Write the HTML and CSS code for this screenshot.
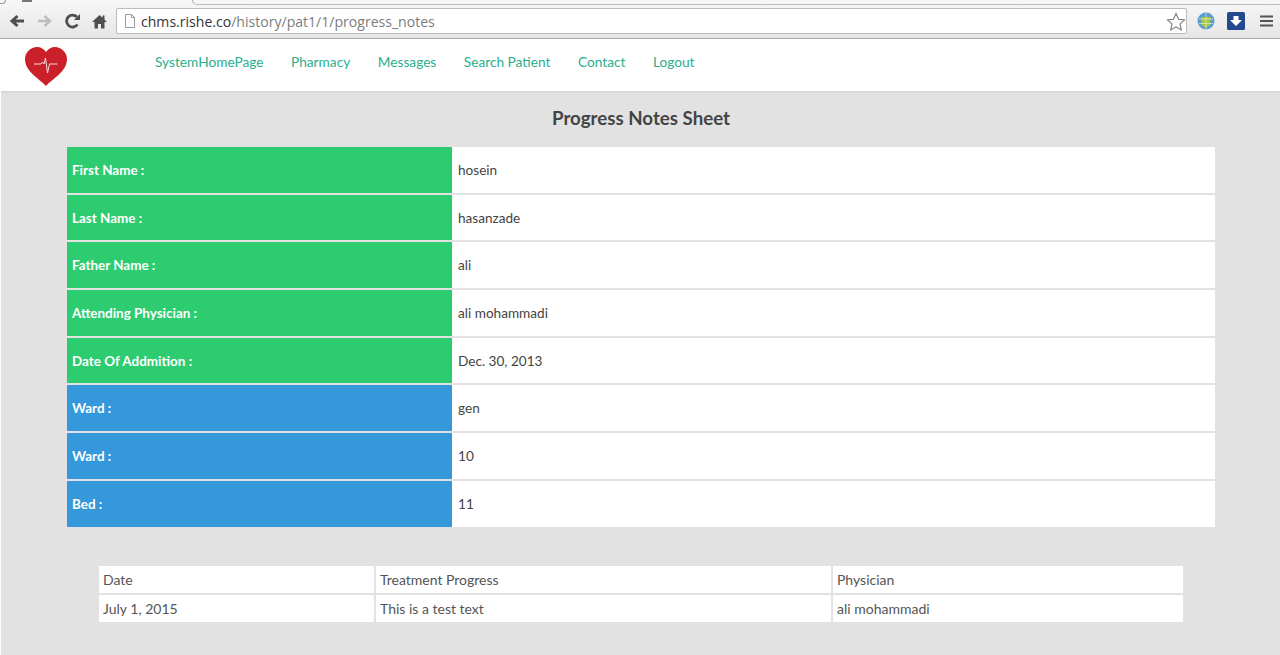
FILE: index.html
```html
<!DOCTYPE html>
<html lang="en">
<head>
<meta charset="utf-8">
<title>Progress Notes Sheet</title>
<link rel="stylesheet" href="styles.css">
</head>
<body>
<div class="chrome">
  <div class="tabstrip">
    <div class="tab-edge"></div>
    <div class="tab-new"></div>
    <div class="tab-line"></div>
  </div>
  <div class="toolbar">
    <svg class="tb-icon tb-back" width="16" height="14" viewBox="0 0 16 14"><path d="M15 7H4M8.500 2 3 7l5.500 5" fill="none" stroke="#4f4f4f" stroke-width="3"/></svg>
    <svg class="tb-icon tb-forward" width="16" height="14" viewBox="0 0 16 14"><path d="M1 7h11M7.500 2 13 7l-5.500 5" fill="none" stroke="#bdbdbd" stroke-width="2.400"/></svg>
    <svg class="tb-icon tb-reload" width="16" height="16" viewBox="0 0 16 16"><path d="M12.500 11.500A6 6 0 1 1 12 4" fill="none" stroke="#4f4f4f" stroke-width="2.800"/><path d="M9 7h6V1z" fill="#4f4f4f"/></svg>
    <svg class="tb-icon tb-home" width="15" height="15" viewBox="0 0 15 15"><path d="M7.500 1 0 8h2.500v6.500h3.500V10h3v4.500h3.500V8H15l-2.500-2.400V1.500h-2v2.200z" fill="#4f4f4f"/></svg>
    <div class="omnibox">
      <svg width="12" height="14" viewBox="0 0 12 14"><path d="M1.500.5h6l3 3v10h-9zM7.500.5v3h3" fill="#fff" stroke="#9a9a9a"/></svg>
      <span class="url"><span class="url-host">chms.rishe.co</span><span class="url-path">/history/pat1/1/progress_notes</span></span>
      <svg class="star" width="20" height="19" viewBox="0 0 20 19"><path d="M10 1.500l2.500 5.700 6 .6-4.500 4.100 1.300 6L10 14.800l-5.300 3.100 1.300-6L1.500 7.800l6-.6z" fill="#fff" stroke="#777" stroke-width="1.100"/></svg>
    </div>
    <svg class="ext ext-globe" width="18" height="18" viewBox="0 0 18 18"><circle cx="9" cy="9" r="8.500" fill="#5b9bd0"/><path d="M4 5h10l-1 8-4 3-4-3z" fill="#a5c83c"/><path d="M9 1v16M2 7h14M2 11.500h14" stroke="#e7eecf" stroke-width=".7"/></svg>
    <svg class="ext ext-save" width="18" height="18" viewBox="0 0 18 18"><rect width="18" height="18" rx="1.500" fill="#25498f"/><path d="M6.500 4h5v4H15l-6 6-6-6h3.500z" fill="#fff"/></svg>
    <svg class="menu" width="13" height="12" viewBox="0 0 13 12"><path d="M0 1.500h13M0 6h13M0 10.500h13" stroke="#555" stroke-width="2.200"/></svg>
  </div>
</div>

<nav class="topnav">
  <svg class="logo" width="42" height="40" viewBox="0 0 42 40">
    <path d="M21 39C15 32 0 25 0 12 0 5 6 0 12 0c4 0 7 2 9 5 2-3 5-5 9-5 6 0 12 5 12 12 0 13-15 20-21 27z" fill="#c9202a"/>
    <path d="M9 17h7l1.500-2 1.500 2 1.500-6 2 15 2-9h8" fill="none" stroke="#f6dcdc" stroke-width="1"/>
  </svg>
  <ul class="navlinks">
    <li><a href="#">SystemHomePage</a></li>
    <li><a href="#">Pharmacy</a></li>
    <li><a href="#">Messages</a></li>
    <li><a href="#">Search Patient</a></li>
    <li><a href="#">Contact</a></li>
    <li><a href="#">Logout</a></li>
  </ul>
</nav>

<main class="content">
  <h1 class="title">Progress Notes Sheet</h1>
  <section class="info">
    <div class="label green">First Name :</div><div class="value">hosein</div>
    <div class="label green">Last Name :</div><div class="value">hasanzade</div>
    <div class="label green">Father Name :</div><div class="value">ali</div>
    <div class="label green">Attending Physician :</div><div class="value">ali mohammadi</div>
    <div class="label green">Date Of Addmition :</div><div class="value">Dec. 30, 2013</div>
    <div class="label blue">Ward :</div><div class="value">gen</div>
    <div class="label blue">Ward :</div><div class="value">10</div>
    <div class="label blue">Bed :</div><div class="value">11</div>
  </section>
  <section class="notes">
    <div class="cell">Date</div><div class="cell">Treatment Progress</div><div class="cell">Physician</div>
    <div class="cell">July 1, 2015</div><div class="cell">This is a test text</div><div class="cell">ali mohammadi</div>
  </section>
</main>
</body>
</html>
```

FILE: styles.css
```css
* { box-sizing: border-box; }
html, body { margin: 0; height: 100%; overflow: hidden; }
body {
  font-family: Lato, "Open Sans", sans-serif;
  color: #444;
  background: #e2e2e2;
  display: flex;
  flex-direction: column;
  height: 655px;
}
.chrome {
  height: 39px;
  flex: none;
  background: linear-gradient(#f7f7f7, #e6e6e6);
  border-bottom: 1px solid #a9a9a9;
  display: flex;
  flex-direction: column;
}
.tabstrip {
  height: 6px;
  flex: none;
  display: flex;
  align-items: flex-start;
  overflow: hidden;
}
.tab-edge { width: 6px; height: 4px; border-right: 1px solid #999; border-bottom: 1px solid #999; border-radius: 0 0 4px 0; }
.tab-new { width: 10px; height: 2px; margin-left: 16px; background: #777; }
.tab-line {
  flex: 1;
  height: 5px;
  margin-left: 160px;
  border-left: 1px solid #aaa;
  border-bottom: 1px solid #bdbdbd;
  border-radius: 0 0 0 5px;
}
.toolbar {
  flex: 1;
  display: flex;
  align-items: center;
  padding: 0 7px 2px 9px;
}
.tb-icon { flex: none; }
.tb-back, .tb-forward { margin-right: 12px; }
.tb-reload { margin-right: 11px; }
.tb-home { margin-right: 9px; }
.omnibox {
  flex: 1;
  height: 26px;
  display: flex;
  align-items: center;
  gap: 5px;
  padding: 0 0 0 7px;
  background: #fff;
  border: 1px solid #bcbcbc;
  border-radius: 2px;
  font-family: "Open Sans", sans-serif;
  font-size: 14.070px;
}
.url-host { color: #333; }
.url-path { color: #7d7d7d; }
.star { margin-left: auto; }
.ext-globe { flex: none; margin-left: 10px; }
.ext-save { flex: none; margin-left: 12px; }
.menu { flex: none; margin-left: 15px; }

.topnav {
  height: 52px;
  flex: none;
  background: #fff;
  display: flex;
  align-items: center;
  padding-left: 25px;
  box-shadow: 0 1px 2px rgba(0, 0, 0, .08);
}
.logo { flex: none; margin-top: 4px; }
.navlinks {
  display: flex;
  gap: 27.500px;
  list-style: none;
  margin: 0 0 7px 88px;
  padding: 0;
  font-size: 13.700px;
}
.navlinks a { color: #2aae8c; text-decoration: none; }

.content {
  flex: 1;
  padding: 0 0 0 66px;
  border-left: 1px solid #fff;
}
.title {
  margin: 0;
  height: 56px;
  line-height: 54px;
  font-size: 18.700px;
  font-weight: 700;
  text-align: center;
  color: #444;
  width: 1148px;
}
.info {
  display: grid;
  grid-template-columns: 385px 1fr;
  grid-auto-rows: 45.700px;
  row-gap: 2px;
  width: 1148px;
  font-size: 13.600px;
}
.label, .value {
  display: flex;
  align-items: center;
}
.label { padding-left: 5px; color: #fff; font-weight: 700; font-size: 13.450px; }
.green { background: #2ecc71; }
.blue { background: #3498db; }
.value { padding-left: 6px; background: #fff; color: #444; }
.notes {
  display: grid;
  grid-template-columns: 275px 455px 350px;
  grid-auto-rows: 27px;
  gap: 2px;
  width: 1084px;
  margin: 39.400px 0 0 32px;
  font-size: 14px;
}
.cell {
  display: flex;
  align-items: center;
  padding-left: 4px;
  background: #fff;
  color: #555;
}
```
